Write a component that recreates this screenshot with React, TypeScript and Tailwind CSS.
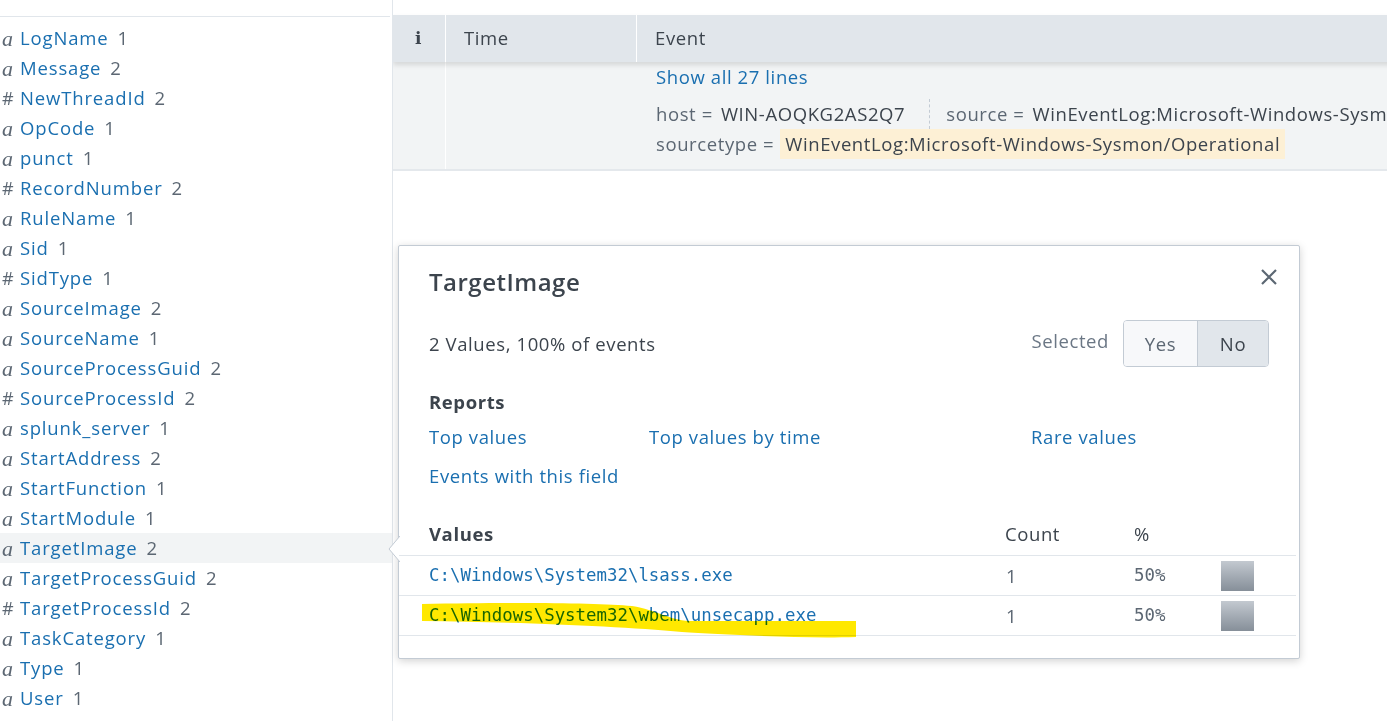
import React from "react";

type Field = { t: "a" | "#"; name: string; n: number; active?: boolean };

const fields: Field[] = [
  { t: "a", name: "LogName", n: 1 },
  { t: "a", name: "Message", n: 2 },
  { t: "#", name: "NewThreadId", n: 2 },
  { t: "a", name: "OpCode", n: 1 },
  { t: "a", name: "punct", n: 1 },
  { t: "#", name: "RecordNumber", n: 2 },
  { t: "a", name: "RuleName", n: 1 },
  { t: "a", name: "Sid", n: 1 },
  { t: "#", name: "SidType", n: 1 },
  { t: "a", name: "SourceImage", n: 2 },
  { t: "a", name: "SourceName", n: 1 },
  { t: "a", name: "SourceProcessGuid", n: 2 },
  { t: "#", name: "SourceProcessId", n: 2 },
  { t: "a", name: "splunk_server", n: 1 },
  { t: "a", name: "StartAddress", n: 2 },
  { t: "a", name: "StartFunction", n: 1 },
  { t: "a", name: "StartModule", n: 1 },
  { t: "a", name: "TargetImage", n: 2, active: true },
  { t: "a", name: "TargetProcessGuid", n: 2 },
  { t: "#", name: "TargetProcessId", n: 2 },
  { t: "a", name: "TaskCategory", n: 1 },
  { t: "a", name: "Type", n: 1 },
  { t: "a", name: "User", n: 1 },
  { t: "a", name: "UtcTime", n: 2 },
];

const sans = "font-['Open_Sans','Lato',sans-serif]";

function Sidebar() {
  return (
    <div className="w-[393px] shrink-0 border-r border-[#e1e6eb] h-[721px] overflow-hidden">
      <div className="h-[17px] border-b border-[#e1e6eb] mr-[2px]" />
      <div className="pt-[6px]">
        {fields.map((f) => (
          <div
            key={f.name}
            className={`h-[30px] flex items-center pl-[2px] ${f.active ? "bg-[#f2f4f5]" : ""}`}
          >
            <span
              className={`w-[18px] text-[#5c6773] ${
                f.t === "a"
                  ? "font-['Liberation_Serif',serif] italic text-[22px]"
                  : "text-[18px]"
              }`}
            >
              {f.t}
            </span>
            <span className="text-[#1a6fb0] text-[18.5px] tracking-[0.85px]">{f.name}</span>
            <span className="text-[#5c6773] text-[18.5px] ml-[9px]">{f.n}</span>
          </div>
        ))}
      </div>
    </div>
  );
}

function Main() {
  return (
    <div className="flex-1 min-w-0 overflow-hidden">
      <div className="h-[15px]" />
      <div className="relative z-10 flex h-[47px] bg-[#e1e6eb] shadow-[0_3px_5px_rgba(0,0,0,0.12)] text-[18.5px] tracking-[0.6px] text-[#3c444d] w-[1100px]">
        <div className="w-[53px] shrink-0 border-r border-white flex items-center justify-center">
          <span className="font-['DejaVu_Serif',serif] font-bold text-[17px] text-[#3c444d] ml-[-1px]">i</span>
        </div>
        <div className="w-[191px] shrink-0 border-r border-white flex items-center pl-[18px] pb-[2px]">Time</div>
        <div className="flex items-center pl-[18px] pb-[2px]">Event</div>
      </div>
      <div className="flex h-[109px] bg-[#f2f4f5] border-b-2 border-[#e4e8ec] w-[1100px] text-[18.5px] tracking-[0.6px]">
        <div className="w-[53px] shrink-0 border-r border-white" />
        <div className="w-[191px] shrink-0" />
        <div className="pl-[19px] pt-[3px] whitespace-nowrap">
          <div className="text-[#1a6fb0] h-[24px] leading-[24px]">Show all 27 lines</div>
          <div className="flex items-center h-[30px] mt-[10px]">
            <span className="text-[#5c6773]">host =</span>
            <span className="ml-[8px] text-[#3c444d]">WIN-AOQKG2AS2Q7</span>
            <span className="ml-[24px] mr-[16px] h-[30px] border-l border-dashed border-[#c3cbd4]" />
            <span className="text-[#5c6773]">source =</span>
            <span className="ml-[8px] text-[#3c444d]">WinEventLog:Microsoft-Windows-Sysmon/Operational</span>
          </div>
          <div className="flex items-center h-[30px]">
            <span className="text-[#5c6773]">sourcetype =</span>
            <span className="ml-[6px] px-[5px] bg-[#fdf0d5] text-[#3c444d] h-[30px] leading-[30px]">
              WinEventLog:Microsoft-Windows-Sysmon/Operational
            </span>
          </div>
        </div>
      </div>
    </div>
  );
}

const mono = "font-['DejaVu_Sans_Mono','Liberation_Mono',monospace] text-[17.4px] tracking-normal";

function Popover() {
  const rows = [
    "C:\\Windows\\System32\\lsass.exe",
    "C:\\Windows\\System32\\wbem\\unsecapp.exe",
  ];
  return (
    <div className="absolute left-[398px] top-[245px] w-[902px] h-[414px] bg-white border border-[#c3cbd4] rounded-[2px] shadow-[0_2px_8px_rgba(0,0,0,0.18)] text-[#3c444d] tracking-[0.6px]">
      <svg className="absolute left-[-11px] top-[290px]" width="12" height="26" viewBox="0 0 12 26">
        <path d="M12 0 L1 13 L12 26 Z" fill="#ffffff" />
        <path d="M12 0 L1 13 L12 26" fill="none" stroke="#c3cbd4" strokeWidth="1" />
      </svg>
      <svg
        className="absolute left-[860px] top-[21px]"
        width="20"
        height="20"
        viewBox="0 0 20 20"
      >
        <path d="M3 3 L17 17 M17 3 L3 17" stroke="#5c6773" strokeWidth="2.2" strokeLinecap="butt" />
      </svg>
      <div className="px-[30px] pt-[20px]">
        <div className="text-[24px] font-semibold leading-[32px] tracking-[0.5px] text-[#3c444d]">TargetImage</div>
        <div className="flex items-center justify-between mt-[22px]">
          <div className="text-[18.5px]">2 Values, 100% of events</div>
          <div className="flex items-center">
            <span className="text-[18.5px] text-[#6b7785] mr-[14px] mt-[-6px]">Selected</span>
            <div className="flex h-[47px] border border-[#c3cbd4] rounded-[4px] overflow-hidden text-[18.5px]">
              <div className="w-[74px] bg-[#f7f8fa] flex items-center justify-center text-[#5c6773] border-r border-[#c3cbd4]">
                Yes
              </div>
              <div className="w-[70px] bg-[#e1e6eb] flex items-center justify-center text-[#3c444d]">No</div>
            </div>
          </div>
        </div>
        <div className="mt-[23px] text-[18.5px] font-bold leading-[24px]">Reports</div>
        <div className="grid grid-cols-[220px_382px_1fr] mt-[11px] text-[18.5px] text-[#1a6fb0] leading-[24px]">
          <span>Top values</span>
          <span>Top values by time</span>
          <span>Rare values</span>
        </div>
        <div className="mt-[15px] text-[18.5px] text-[#1a6fb0] leading-[24px]">Events with this field</div>
      </div>
      <div className="relative mt-[24px] mr-[3px]">
        <div className="grid grid-cols-[606px_129px_87px_1fr] h-[44px] items-center border-b border-[#e1e6eb] text-[18.5px]">
          <span className="pl-[30px] font-bold">Values</span>
          <span>Count</span>
          <span>%</span>
          <span />
        </div>
        {rows.map((r) => (
          <div
            key={r}
            className="grid grid-cols-[606px_129px_87px_1fr] h-[40px] items-center border-b border-[#e1e6eb]"
          >
            <span className={`pl-[30px] ${mono} text-[#1a6fb0]`}>{r}</span>
            <span className="text-[18.5px] text-[#5c6773] pl-[1px]">1</span>
            <span className={`${mono} text-[#5c6773]`}>50%</span>
            <span className="h-[30px] w-[33px] bg-gradient-to-b from-[#c3c9d0] to-[#868f99]" />
          </div>
        ))}
        <svg
          className="absolute left-0 top-0 pointer-events-none mix-blend-multiply"
          width="480"
          height="140"
          viewBox="0 0 480 140"
        >
          <path
            d="M23,92 C120,90 200,91 233,94 C258,98 270,108 290,109 L457,109 L457,125 C400,127 320,122 283,120 C220,114 120,110 23,109 Z"
            fill="#ffe800"
          />
        </svg>
      </div>
    </div>
  );
}

export default function App() {
  return (
    <div className={`relative w-[1387px] h-[721px] overflow-hidden bg-white flex ${sans}`}>
      <Sidebar />
      <Main />
      <Popover />
    </div>
  );
}
